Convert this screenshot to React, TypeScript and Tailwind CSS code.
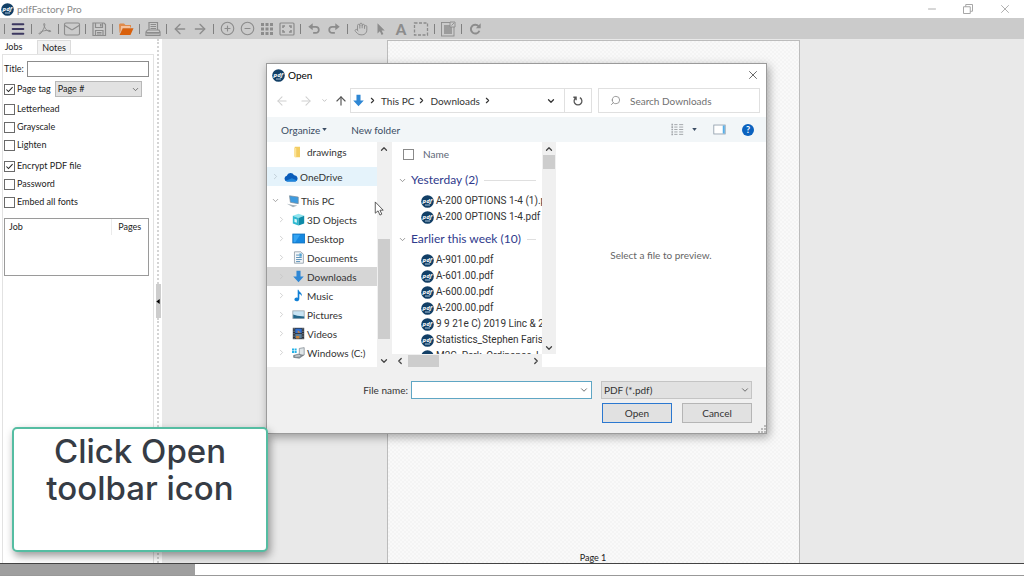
import React, { useState } from 'react';
import {
  ArrowLeft,
  ArrowRight,
  ArrowUp,
  ChevronDown,
  ChevronLeft,
  ChevronRight,
  ChevronUp,
  CircleMinus,
  CirclePlus,
  Hand,
  Mail,
  Menu,
  Minus,
  Search,
  X,
} from 'lucide-react';

const Svg: React.FC<{ children: React.ReactNode; className?: string }> = ({ children, className = 'h-4 w-4' }) => (
  <svg viewBox="0 0 16 16" className={className} fill="none" stroke="currentColor" aria-hidden="true">
    {children}
  </svg>
);

const PdfLogo: React.FC = () => (
  <svg viewBox="0 0 13 13" className="h-[13px] w-[13px] shrink-0" aria-hidden="true">
    <circle cx="6.5" cy="6.5" r="6.3" fill="#123f66" />
    <text x="6.3" y="7.6" fill="#fff" fontSize="6" fontWeight="700" fontStyle="italic" textAnchor="middle" fontFamily="Open Sans, sans-serif">
      pdf
    </text>
    <path d="M4 10h5" stroke="#a9c3d8" strokeWidth="1" />
  </svg>
);

/* Toolbar glyphs */

const AcrobatIcon = () => (
  <Svg>
    <path d="M7 2.5c1.6 0 .6 3.500-.9 6.200C4.700 11.500 3 13.500 2.200 13c-.8-.8 2-2.700 5.300-3.300 3.200-.6 6.500-.4 6.300.5-.3 1.300-3.600-.2-5.200-2.400C7 5.500 6.300 2.600 7 2.500z" strokeWidth="1" />
  </Svg>
);

const SaveIcon = () => (
  <Svg>
    <path d="M2 2h11l1.500 1.500V14.500H2z M4.500 2v4.500h7V2 M4.500 14.500V9.500h7.500v5 M6 11.500h4.500 M6 13h4.500" strokeWidth="1.200" />
    <path d="M9 3h1.500v2.500H9z" fill="currentColor" stroke="none" />
  </Svg>
);

const OpenIcon = () => (
  <Svg>
    <path d="M1 3.500 2 2.500h4l1.500 1.500H13v2.500H5L1.500 12z" fill="#e08a4a" stroke="none" />
    <path d="M3 5h9v2H4.700L2.500 11z" fill="#f5c19b" stroke="none" />
    <path d="M4.800 7.200H15.500L12.500 14H1.500z" fill="#d9600c" stroke="none" />
  </Svg>
);

const PrinterIcon = () => (
  <Svg>
    <path d="M4 9V1.500h8.500V9 M5.500 3.500h5.500 M5.500 5.500h5.500 M5.500 7.500h5.500 M2.500 9h11.500l1 2v3.500H1V11z M1 11.500h14" strokeWidth="1.200" />
    <path d="M2 12.800h12" strokeWidth="1" />
  </Svg>
);

const GridIcon = () => (
  <Svg>
    {[2, 6.500, 11].map((y) =>
      [2, 6.500, 11].map((x) => <rect key={`${x}-${y}`} x={x} y={y} width="3" height="3" fill="currentColor" stroke="none" />)
    )}
  </Svg>
);

const FitIcon = () => (
  <Svg>
    <rect x="1" y="2" width="14" height="12" rx="1" strokeWidth="1.200" />
    <path d="M4 7V5h2 M10 5h2v2 M12 9v2h-2 M6 11H4V9" strokeWidth="1.600" />
  </Svg>
);

const UndoIcon = () => (
  <Svg className="h-[14px] w-[14px]">
    <path d="M5 5.500h5a3.500 3.500 0 0 1 0 7H7" strokeWidth="2" />
    <path d="M1.500 5.500 6.500 1.500v8z" fill="currentColor" stroke="none" />
  </Svg>
);

const RedoIcon = () => (
  <Svg className="h-[14px] w-[14px]">
    <path d="M11 5.500H6a3.500 3.500 0 0 0 0 7h3" strokeWidth="2" />
    <path d="M14.500 5.500 9.500 1.500v8z" fill="currentColor" stroke="none" />
  </Svg>
);

const PointerIcon = () => (
  <Svg className="h-[14px] w-[14px]">
    <path d="M4 1.500v11.500l2.700-2.500 2 4.300 2-1-2-4.100h3.600z" fill="currentColor" stroke="none" />
  </Svg>
);

const MarqueeIcon = () => (
  <Svg>
    <rect x="1.500" y="2" width="13" height="12" strokeWidth="1.300" strokeDasharray="3 1.500" />
  </Svg>
);

const NoteIcon = () => (
  <Svg>
    <rect x="1.500" y="1.500" width="12.500" height="13.500" strokeWidth="0.900" />
    <rect x="4" y="4" width="8" height="9" fill="currentColor" stroke="none" opacity="0.75" />
    <path d="M10 1h5v5h-5z M11.500 4.500 14 2" strokeWidth="0.900" fill="#cbcbcb" />
  </Svg>
);

const RefreshIcon = () => (
  <Svg className="h-[14px] w-[14px]">
    <path d="M12 4.800A5 5 0 1 0 13 10" strokeWidth="2.200" />
    <path d="M14.500 1.500v5.500H9z" fill="currentColor" stroke="none" />
  </Svg>
);

const toolGroups: { label: string; icon: React.ReactNode }[][] = [
  [{ label: 'Menu', icon: <Menu className="h-4 w-4 text-[#3d3860]" strokeWidth={3} /> }],
  [{ label: 'Save PDF', icon: <AcrobatIcon /> }],
  [{ label: 'Email', icon: <Mail className="h-[18px] w-[18px]" strokeWidth={1.5} /> }],
  [{ label: 'Save', icon: <SaveIcon /> }],
  [{ label: 'Open', icon: <OpenIcon /> }],
  [{ label: 'Print', icon: <PrinterIcon /> }],
  [
    { label: 'Previous', icon: <ArrowLeft className="h-4 w-4" strokeWidth={2} /> },
    { label: 'Next', icon: <ArrowRight className="h-4 w-4" strokeWidth={2} /> },
  ],
  [
    { label: 'Zoom in', icon: <CirclePlus className="h-[15px] w-[15px]" strokeWidth={1.8} /> },
    { label: 'Zoom out', icon: <CircleMinus className="h-[15px] w-[15px]" strokeWidth={1.8} /> },
    { label: 'Thumbnails', icon: <GridIcon /> },
    { label: 'Fit page', icon: <FitIcon /> },
  ],
  [
    { label: 'Undo', icon: <UndoIcon /> },
    { label: 'Redo', icon: <RedoIcon /> },
  ],
  [
    { label: 'Pan', icon: <Hand className="h-[14px] w-[14px]" strokeWidth={1.6} /> },
    { label: 'Pointer', icon: <PointerIcon /> },
    { label: 'Text', icon: <span className="text-[15px] leading-4 font-black">A</span> },
    { label: 'Select', icon: <MarqueeIcon /> },
  ],
  [{ label: 'Note', icon: <NoteIcon /> }],
  [{ label: 'Refresh', icon: <RefreshIcon /> }],
];

const Toolbar: React.FC = () => (
  <div role="toolbar" className="flex h-[21px] shrink-0 items-center bg-[#cbcbcb] pl-px text-[#8c8c8c]">
    {toolGroups.map((group) => (
      <div key={group[0].label} className="flex items-center">
        <span className="flex w-[7px] justify-center">
          <span className="h-[10px] w-px bg-[#808080]" />
        </span>
        {group.map((tool) => (
          <button key={tool.label} type="button" aria-label={tool.label} className="flex h-5 w-5 items-center justify-center">
            {tool.icon}
          </button>
        ))}
      </div>
    ))}
  </div>
);

/* Job options on the left */

const Check: React.FC<{ label: string; initial?: boolean }> = ({ label, initial = false }) => {
  const [checked, setChecked] = useState(initial);
  return (
    <label className="flex h-[18px] items-center gap-[2px]">
      <span className="grid">
        <input
          type="checkbox"
          checked={checked}
          onChange={(e) => setChecked(e.target.checked)}
          className="col-start-1 row-start-1 h-[11px] w-[11px] appearance-none border border-[#6a6a6a] bg-white"
        />
        {checked && (
          <Svg className="pointer-events-none col-start-1 row-start-1 h-[11px] w-[11px] text-[#222]">
            <path d="M3.500 8 6.500 11 12.500 4.500" strokeWidth="1.500" />
          </Svg>
        )}
      </span>
      {label}
    </label>
  );
};

const SidePanel: React.FC = () => (
  <aside className="flex w-[162px] shrink-0 bg-white text-[9px] leading-3 text-[#222]">
    <div className="flex flex-1 flex-col pl-[2px]">
      <div role="tablist" className="flex h-[15px] items-end">
        <button role="tab" aria-selected="true" type="button" className="h-[15px] w-[35px] pr-3">Jobs</button>
        <button role="tab" aria-selected="false" type="button" className="h-[14px] w-[34px] border border-b-0 border-[#dcdcdc] bg-[#f2f2f2]">
          Notes
        </button>
      </div>
      <div className="flex flex-1 flex-col border-t border-r border-l border-[#e2e2e2] py-[6px] pr-1 pl-px">
        <div className="flex items-center gap-[3px]">
          <label htmlFor="job-title">Title:</label>
          <input id="job-title" className="h-4 min-w-0 flex-1 border border-[#8c8c8c] px-1" />
        </div>
        <div className="mt-[3px] flex items-center gap-1">
          <Check label="Page tag" initial />
          <div className="relative w-[87px]">
            <select aria-label="Page tag" className="h-4 w-full appearance-none border border-[#b8b8b8] bg-[#e2e2e2] px-[2px]">
              <option>Page #</option>
            </select>
            <ChevronDown className="pointer-events-none absolute top-1 right-[2px] h-[9px] w-[9px] text-[#555]" />
          </div>
        </div>
        <div className="mt-[2px]">
          <Check label="Letterhead" />
          <Check label="Grayscale" />
          <Check label="Lighten" />
        </div>
        <div className="mt-[3px] flex flex-col">
          <Check label="Encrypt PDF file" initial />
          <Check label="Password" />
          <Check label="Embed all fonts" />
        </div>
        <div className="mt-[7px] h-[58px] border border-[#9a9a9a]">
          <table className="w-full">
            <thead>
              <tr>
                <th className="border-r border-[#ebebeb] py-[2px] pl-1 text-left font-normal">Job</th>
                <th className="w-[37px] py-[2px] font-normal">Pages</th>
              </tr>
            </thead>
          </table>
        </div>
      </div>
    </div>
    <div className="flex w-2 flex-col items-center justify-center">
      <div className="w-0 flex-1 border-l-2 border-dotted border-[#d4d4d4]" />
      <button type="button" aria-label="Collapse panel" className="flex h-[34px] w-[5px] items-center justify-center bg-[#cdcdcd]">
        <svg viewBox="0 0 4 6" className="h-[5px] w-[4px]">
          <path d="M4 0v6L0 3z" fill="#000" />
        </svg>
      </button>
      <div className="w-0 flex-1 border-l-2 border-dotted border-[#d4d4d4]" />
    </div>
  </aside>
);

/* Folder tree glyphs */

const FolderGlyph = () => (
  <Svg className="h-3 w-3">
    <path d="M5 1h7v14H5z" fill="#f3cd62" stroke="none" />
    <path d="M4 2l3 1v12l-3-1z" fill="#fbe39b" stroke="none" />
  </Svg>
);

const CloudGlyph = () => (
  <Svg className="h-[14px] w-[14px]">
    <path d="M3.500 13a3.300 3.300 0 0 1-.3-6.500A4.500 4.500 0 0 1 11.500 6 3.600 3.600 0 0 1 13 13z" fill="#0a5cba" stroke="none" />
    <path d="M2 12.300 9 9.500l6 2.500a3 3 0 0 1-2 1H3.500z" fill="#1f86dc" stroke="none" />
  </Svg>
);

const PcGlyph = () => (
  <Svg className="h-[14px] w-[14px]">
    <path d="M4 2l10 1.500V11L5 9.500z" fill="#3d9be0" stroke="#7d8b96" strokeWidth="0.800" />
    <path d="M1 11l7 1.500 5 .5-5 2z" fill="#a8b4bc" stroke="none" />
  </Svg>
);

const CubeGlyph = () => (
  <Svg className="h-[13px] w-[13px]">
    <path d="M1 3.500 8 1l7 2.500-7 2.500z" fill="#8fe4ee" stroke="none" />
    <path d="M1 3.500 8 6v9.500L1 13z" fill="#2fb9d0" stroke="none" />
    <path d="M15 3.500 8 6v9.500l7-2.500z" fill="#0f8ba8" stroke="none" />
    <path d="M3 7l3 1v4l-3-1z" fill="#d5f6fa" stroke="none" />
  </Svg>
);

const DesktopGlyph = () => (
  <Svg className="h-[13px] w-[13px]">
    <rect x="1" y="2.500" width="14.500" height="11" fill="#1688e0" stroke="#0d6fbe" />
    <path d="M2 3.500h8L4 12.500H2z" fill="#35a4f2" stroke="none" />
  </Svg>
);

const DocumentGlyph = () => (
  <Svg className="h-[13px] w-[13px]">
    <path d="M3 1h8l3 3v11H3z" fill="#f5f7f9" stroke="#8d9aa4" />
    <path d="M5 5h4 M5 8h7 M5 10.500h7 M5 13h5" stroke="#3f7fae" />
    <path d="M9 3h3v4H9z" fill="#55a3d2" stroke="none" />
  </Svg>
);

const DownloadGlyph = () => (
  <Svg className="h-[13px] w-[13px]">
    <path d="M5.500 1h5v7h4L8 15 1.500 8h4z" fill="#2f87d4" stroke="none" />
  </Svg>
);

const MusicGlyph = () => (
  <Svg className="h-[13px] w-[13px]">
    <path d="M8 1c.5 3 5 3.500 4 8-.7-2-2-2.500-3-2.700V12c0 4-6 4-6 1 0-2 2.500-3 4-2V1z" fill="#1180d6" stroke="none" />
  </Svg>
);

const PictureGlyph = () => (
  <Svg className="h-[13px] w-[13px]">
    <rect x="1" y="3.500" width="14" height="9.500" fill="#c7e3f3" stroke="#9aa7b0" />
    <path d="M1.500 12.500V8l5 1.500 8.500 1v2z" fill="#23668a" stroke="none" />
  </Svg>
);

const VideoGlyph = () => (
  <Svg className="h-[13px] w-[13px]">
    <rect x="1" y="1" width="14" height="14" fill="#2b3038" stroke="none" />
    <path d="M4 2h8v5.500H4z" fill="#2f6fd0" stroke="none" />
    <path d="M4 8.500h8V14H4z" fill="#5b7f9b" stroke="none" />
    <path d="M7 4l4 3H7z M5 11h4v3H5z" fill="#cc8237" stroke="none" />
    <path d="M2.500 1.500v13 M13.500 1.500v13" stroke="#b8bec6" strokeDasharray="1.500 1.500" />
  </Svg>
);

const DriveGlyph = () => (
  <Svg className="h-[13px] w-[13px]">
    <path d="M0 3h2.500v2.500H0z M3.200 3h2.500v2.500H3.200z M0 6.200h2.500v2.500H0z M3.200 6.200h2.500v2.500H3.200z" fill="#25b3e8" stroke="none" />
    <path d="M9 3l6-1v9l-6 1.500z" fill="#dfe5e8" stroke="#7d868d" strokeWidth="0.900" />
    <path d="M2 11.500l6-1.500 6 1.500-5 3.500-7-1z" fill="#8d969d" stroke="#5f686f" strokeWidth="0.700" />
    <path d="M4 12.500l6-.5" stroke="#eef1f3" />
  </Svg>
);

interface TreeItem {
  name: string;
  icon: React.ReactNode;
  highlight?: string;
}

const pcFolders: TreeItem[] = [
  { name: '3D Objects', icon: <CubeGlyph /> },
  { name: 'Desktop', icon: <DesktopGlyph /> },
  { name: 'Documents', icon: <DocumentGlyph /> },
  { name: 'Downloads', icon: <DownloadGlyph />, highlight: 'bg-[#d6d6d6]' },
  { name: 'Music', icon: <MusicGlyph /> },
  { name: 'Pictures', icon: <PictureGlyph /> },
  { name: 'Videos', icon: <VideoGlyph /> },
  { name: 'Windows (C:)', icon: <DriveGlyph /> },
];

const ScrollButton: React.FC<{ label: string; children: React.ReactNode }> = ({ label, children }) => (
  <button type="button" aria-label={label} className="flex h-[13px] w-[13px] shrink-0 items-center justify-center text-[#444]">
    {children}
  </button>
);

const FolderTree: React.FC = () => (
  <div className="flex w-[125px] shrink-0 border-r border-[#f0f0f0]">
    <nav className="flex min-w-0 flex-1 flex-col">
      <div className="flex h-[19px] items-center gap-1 pl-6">
        <FolderGlyph />
        drawings
      </div>
      <div className="mt-[6px] flex h-[19px] items-center bg-[#e5f3fb] pl-1">
        <ChevronRight className="h-[9px] w-[9px] text-[#b5c3cc]" />
        <span className="ml-1 flex items-center gap-[2px]"><CloudGlyph />OneDrive</span>
      </div>
      <div className="mt-[5px] flex h-[19px] items-center pl-1">
        <ChevronDown className="h-[9px] w-[9px] text-[#8a8a8a]" />
        <span className="ml-[6px] flex items-center gap-px"><PcGlyph />This PC</span>
      </div>
      {pcFolders.map((item) => (
        <div key={item.name} className={`flex h-[19px] items-center pl-[10px] whitespace-nowrap ${item.highlight ?? ''}`}>
          <ChevronRight className="h-[9px] w-[9px] shrink-0 text-[#c4c4c4]" />
          <span className="ml-[6px] flex items-center gap-[2px]">{item.icon}{item.name}</span>
        </div>
      ))}
    </nav>
    <div className="flex w-[14px] flex-col items-center bg-[#f0f0f0]">
      <ScrollButton label="Scroll folders up"><ChevronUp className="h-[10px] w-[10px]" strokeWidth={3} /></ScrollButton>
      <div className="mt-[84px] h-[100px] w-3 bg-[#cdcdcd]" />
      <div className="flex-1" />
      <ScrollButton label="Scroll folders down"><ChevronDown className="h-[10px] w-[10px]" strokeWidth={3} /></ScrollButton>
    </div>
  </div>
);

const fileGroups = [
  { title: 'Yesterday (2)', files: ['A-200 OPTIONS 1-4 (1).pdf', 'A-200 OPTIONS 1-4.pdf'] },
  {
    title: 'Earlier this week (10)',
    files: [
      'A-901.00.pdf',
      'A-601.00.pdf',
      'A-600.00.pdf',
      'A-200.00.pdf',
      '9 9 21e C) 2019 Linc & 20',
      'Statistics_Stephen Farish 2',
      'M2G_Park_Ordinance_Let',
    ],
  },
];

const FileList: React.FC = () => (
  <div className="flex w-[164px] shrink-0 flex-col">
    <div className="flex h-[212px]">
      <div className="min-w-0 flex-1 overflow-hidden">
        <div className="flex h-6 items-center gap-[9px] pl-[11px] text-[#5b6675]">
          <input type="checkbox" aria-label="Select all files" className="h-[11px] w-[11px] appearance-none border border-[#8a8a8a]" />
          Name
        </div>
        {fileGroups.map((group) => (
          <section key={group.title} className="pt-[3px]">
            <h3 className="flex h-[22px] items-center text-[12px] whitespace-nowrap text-[#2f3a8c]">
              <ChevronDown className="mr-1 ml-[6px] h-[9px] w-[9px] shrink-0 text-[#7a7a7a]" />
              {group.title}
              <span className="mr-[6px] ml-[6px] h-px flex-1 bg-[#dfdfdf]" />
            </h3>
            <ul className="pt-[2px] font-[Roboto,sans-serif]">
              {group.files.map((file) => (
                <li key={file} className="flex h-4 items-center gap-[2px] pl-[29px] whitespace-nowrap">
                  <PdfLogo />
                  {file}
                </li>
              ))}
            </ul>
          </section>
        ))}
      </div>
      <div className="flex w-[14px] flex-col items-center bg-[#f0f0f0]">
        <ScrollButton label="Scroll files up"><ChevronUp className="h-[10px] w-[10px]" strokeWidth={3} /></ScrollButton>
        <div className="h-[14px] w-3 bg-[#cdcdcd]" />
        <div className="flex-1" />
        <ScrollButton label="Scroll files down"><ChevronDown className="h-[10px] w-[10px]" strokeWidth={3} /></ScrollButton>
      </div>
    </div>
    <div className="mr-[14px] flex h-[13px] items-center bg-[#f0f0f0] pl-px">
      <ScrollButton label="Scroll files left"><ChevronLeft className="h-[10px] w-[10px]" strokeWidth={3} /></ScrollButton>
      <div className="ml-[2px] h-3 w-[31px] bg-[#cdcdcd]" />
      <div className="flex-1" />
      <ScrollButton label="Scroll files right"><ChevronRight className="h-[10px] w-[10px]" strokeWidth={3} /></ScrollButton>
    </div>
  </div>
);

const AddressRow: React.FC = () => (
  <div className="flex h-[25px] items-center pr-[6px] text-[#333]">
    <div className="flex w-[83px] items-center pl-2">
      <button type="button" aria-label="Back"><ArrowLeft className="h-[14px] w-[14px] text-[#cfcfcf]" strokeWidth={1.8} /></button>
      <button type="button" aria-label="Forward" className="ml-[10px]"><ArrowRight className="h-[14px] w-[14px] text-[#cfcfcf]" strokeWidth={1.8} /></button>
      <button type="button" aria-label="Recent locations" className="ml-2"><ChevronDown className="h-[7px] w-[7px] text-[#bbb]" strokeWidth={3} /></button>
      <button type="button" aria-label="Up one level" className="ml-[6px]"><ArrowUp className="h-[14px] w-[14px] text-[#555]" /></button>
    </div>
    <div className="flex h-full flex-1 items-center border border-[#e0e0e0] pl-px">
      <DownloadGlyph />
      <ChevronRight className="mr-1 ml-[3px] h-[9px] w-[9px]" strokeWidth={3} />
      This PC
      <ChevronRight className="mr-1 ml-[3px] h-[9px] w-[9px]" strokeWidth={3} />
      Downloads
      <ChevronRight className="mr-1 ml-[3px] h-[9px] w-[9px]" strokeWidth={3} />
      <button type="button" aria-label="Show locations" className="mr-2 ml-auto"><ChevronDown className="h-[10px] w-[10px]" strokeWidth={3} /></button>
      <button type="button" aria-label="Reload" className="flex h-full w-[27px] items-center justify-center border-l border-[#e0e0e0] text-[#555]">
        <Svg className="h-3 w-3">
          <path d="M10.500 3.500a5.200 5.200 0 1 1-5 0 M5.500 7V3H1.800" strokeWidth="1.700" />
        </Svg>
      </button>
    </div>
    <div className="ml-[6px] flex h-full w-[162px] items-center border border-[#e0e0e0] pl-[11px]">
      <Search className="h-[11px] w-[11px] shrink-0 -scale-x-100 text-[#8a8a8a]" strokeWidth={1.8} />
      <input
        type="search"
        aria-label="Search Downloads"
        placeholder="Search Downloads"
        className="ml-[9px] min-w-0 flex-1 outline-none placeholder:text-[#707070]"
      />
    </div>
  </div>
);

const OpenDialog: React.FC = () => (
  <div
    role="dialog"
    aria-label="Open"
    className="absolute top-[63px] left-[266px] w-[501px] border border-[#9b9b9b] bg-white text-[10px] leading-4 text-[#333] shadow-[2px_3px_9px_rgba(0,0,0,0.35)]"
  >
    <header className="flex h-6 items-center gap-[3px] pr-[6px] pb-[2px] pl-[5px] text-black">
      <PdfLogo />
      <h2>Open</h2>
      <button type="button" aria-label="Close" className="ml-auto"><X className="h-[14px] w-[14px] text-[#555]" strokeWidth={1.5} /></button>
    </header>
    <AddressRow />
    <div className="mt-1 flex h-[25px] items-center bg-[#f2f6f8] pr-3 pl-[14px] text-[#3a4c63]">
      <button type="button" className="flex items-center gap-[2px]">
        Organize
        <svg viewBox="0 0 6 4" className="h-[3px] w-[5px]"><path d="M0 0h6L3 4z" fill="currentColor" /></svg>
      </button>
      <button type="button" className="ml-6">New folder</button>
      <button type="button" aria-label="Change view" className="ml-auto flex items-center gap-2">
        <Svg className="h-[13px] w-[13px] text-[#a3a7ab]">
          <path d="M1.500 1v14" strokeWidth="2" strokeDasharray="2 1" />
          <path d="M4 2h4 M4 5h4 M4 8h4 M4 11h4 M4 14h4 M10 2h5 M10 5h5 M10 8h5 M10 11h5 M10 14h5" strokeWidth="1.200" />
        </Svg>
        <svg viewBox="0 0 6 4" className="h-[3px] w-[5px]"><path d="M0 0h6L3 4z" fill="currentColor" /></svg>
      </button>
      <button type="button" aria-label="Preview pane" className="ml-4">
        <Svg className="h-[13px] w-[13px] text-[#8c9ba8]">
          <rect x="1" y="2.500" width="14" height="11" fill="#fff" />
          <path d="M12 3h2.500v10H12z" fill="#58aee6" stroke="none" />
        </Svg>
      </button>
      <button type="button" aria-label="Help" className="ml-4 flex h-3 w-3 items-center justify-center rounded-full bg-[#0b62bf] text-[9px] leading-3 font-bold text-white">
        ?
      </button>
    </div>
    <div className="flex h-[225px]">
      <FolderTree />
      <FileList />
      <div className="flex flex-1 items-center justify-center text-[#666]">Select a file to preview.</div>
    </div>
    <footer className="flex flex-col gap-1 bg-[#f0f0f0] pt-[14px] pr-[14px] pb-[10px]">
      <div className="flex items-center">
        <label htmlFor="file-name" className="w-[144px] pr-[3px] text-right">File name:</label>
        <div className="flex h-[18px] flex-1 items-center border border-[#5fa6c4] bg-white">
          <input id="file-name" className="h-full min-w-0 flex-1 px-1 outline-none" />
          <button type="button" aria-label="Recent files" className="px-[2px]"><ChevronDown className="h-[10px] w-[10px] text-[#555]" /></button>
        </div>
        <div className="relative ml-[9px] w-[151px]">
          <select aria-label="File type" className="h-[18px] w-full appearance-none border border-[#c4c4c4] bg-[#e1e1e1] px-[2px] leading-4">
            <option>PDF (*.pdf)</option>
          </select>
          <ChevronDown className="pointer-events-none absolute top-1 right-[2px] h-[10px] w-[10px] text-[#555]" />
        </div>
      </div>
      <div className="flex justify-end gap-[10px]">
        <button type="button" className="flex h-5 w-[70px] items-center justify-center border border-[#2b78d0] bg-[#e1e1e1]">Open</button>
        <button type="button" className="flex h-5 w-[70px] items-center justify-center border border-[#b5b5b5] bg-[#e1e1e1]">Cancel</button>
      </div>
    </footer>
    <svg viewBox="0 0 8 8" className="absolute right-0 bottom-0 h-2 w-2" aria-hidden="true">
      <path d="M6 0h2v2H6z M6 3h2v2H6z M6 6h2v2H6z M3 3h2v2H3z M3 6h2v2H3z M0 6h2v2H0z" fill="#b9b9b9" />
    </svg>
  </div>
);

export default function App() {
  return (
    <div className="relative flex h-screen flex-col overflow-hidden bg-[#e9e9e9] font-[Lato,'Open_Sans',sans-serif]">
      <header className="flex h-[18px] shrink-0 items-center bg-white pr-3 pl-px text-[#8a8a8a]">
        <PdfLogo />
        <h1 className="ml-[3px] text-[10px] leading-4">pdfFactory Pro</h1>
        <div className="ml-auto flex items-center gap-6 text-[#a5a5a5]">
          <button type="button" aria-label="Minimize"><Minus className="h-3 w-3" strokeWidth={1.8} /></button>
          <button type="button" aria-label="Restore">
            <Svg className="h-3 w-3">
              <path d="M2 5h9v9H2z M5 5V2h9v9h-3" strokeWidth="1.300" />
            </Svg>
          </button>
          <button type="button" aria-label="Close window"><X className="h-[14px] w-[14px]" strokeWidth={1.5} /></button>
        </div>
      </header>

      <Toolbar />

      <div className="flex min-h-0 flex-1">
        <SidePanel />
        <main className="flex flex-1 justify-center pt-px">
          <div className="flex w-[413px] items-end justify-center border border-b-0 border-[#bcbcbc] bg-[repeating-conic-gradient(#f4f4f4_0_25%,#f9f9f9_0_50%)] bg-size-[4px_4px] text-[9px] leading-[10px] text-[#222]">
            Page 1
          </div>
        </main>
      </div>

      {/* Playback position */}
      <div className="flex h-[13px] shrink-0 border-t border-b border-t-[#444] border-b-[#999] bg-white">
        <div className="w-[19%] bg-[#9f9f9f]" />
      </div>

      <OpenDialog />

      <svg viewBox="0 0 10 16" className="absolute top-[201px] left-[374px] h-[15px] w-[10px]" aria-hidden="true">
        <path d="M1 1v12l3-2.500 2 4.500 2-1-2-4.200h3.500z" fill="#fff" stroke="#444" strokeWidth="0.900" />
      </svg>

      <div className="absolute top-[427px] left-3 h-[125px] w-[256px] rounded-[5px] border-2 border-[#55bda2] bg-white pt-1 text-center font-[Inter,sans-serif] text-[33px] leading-[37px] font-medium text-[#363c45] shadow-[2px_4px_9px_rgba(0,0,0,0.4)]">
        <p>Click Open<br />toolbar icon</p>
      </div>
    </div>
  );
}
